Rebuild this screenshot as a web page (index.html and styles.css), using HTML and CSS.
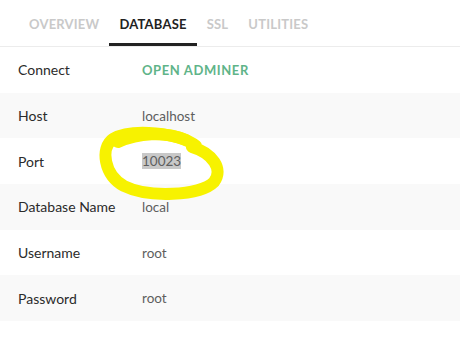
FILE: index.html
```html
<!DOCTYPE html>
<html lang="en">
<head>
    <meta charset="UTF-8">
    <title>Site info: database</title>
    <link rel="stylesheet" href="styles.css">
</head>
<body>

    <nav class="tabs">
        <a class="tab">Overview</a>
        <a class="tab active">Database</a>
        <a class="tab">SSL</a>
        <a class="tab">Utilities</a>
    </nav>

    <div class="rows">
        <div class="row">
            <span class="label">Connect</span>
            <a class="link">Open Adminer</a>
        </div>
        <div class="row">
            <span class="label">Host</span>
            <span class="value">localhost</span>
        </div>
        <div class="row">
            <span class="label">Port</span>
            <span class="value"><span class="selected">10023</span></span>
        </div>
        <div class="row">
            <span class="label">Database Name</span>
            <span class="value">local</span>
        </div>
        <div class="row">
            <span class="label">Username</span>
            <span class="value">root</span>
        </div>
        <div class="row">
            <span class="label">Password</span>
            <span class="value">root</span>
        </div>
    </div>

    <!-- marker scribble around the port -->
    <svg class="scribble" width="460" height="356" viewBox="0 0 460 356">
        <path d="M196 146 C180 133 132 128 113 139 C100 148 104 175 124 186 C148 198 200 196 214 182 C224 169 212 153 192 147"
              fill="none" stroke="#f7f200" stroke-width="12" stroke-linecap="round" stroke-linejoin="round"/>
        <path d="M118 142 C138 133 165 131 186 140"
              fill="none" stroke="#f7f200" stroke-width="12" stroke-linecap="round"/>
    </svg>

</body>
</html>
```

FILE: styles.css
```css
body {
    margin: 0;
    background-color: #fff;
    font-family: Lato, "Open Sans", sans-serif;
    position: relative;
}

.tabs {
    display: flex;
    height: 46px;
    padding-left: 19px;
    border-bottom: 1px solid #ececec;
}

.tab {
    display: flex;
    align-items: center;
    padding: 5px 10px 0;
    font-size: 13px;
    font-weight: 700;
    letter-spacing: 0.2px;
    text-transform: uppercase;
    color: #c9c9c9;
    border-bottom: 3px solid transparent;
}

.tab.active {
    color: #222;
    border-bottom-color: #222;
}

.row {
    display: flex;
    align-items: center;
    height: 45.7px;
    padding-left: 18px;
}

.row:nth-child(even) {
    background-color: #f9f9f9;
}

.label {
    width: 124px;
    font-size: 14px;
    color: #2b2b2b;
}

.value {
    font-size: 13.5px;
    color: #5e5e5e;
}

.selected {
    background-color: #c8c8c8;
}

.link {
    font-size: 13px;
    font-weight: 700;
    letter-spacing: 0.6px;
    text-transform: uppercase;
    color: #5fb489;
}

.scribble {
    position: absolute;
    left: 0;
    top: 0;
    pointer-events: none;
}
```
